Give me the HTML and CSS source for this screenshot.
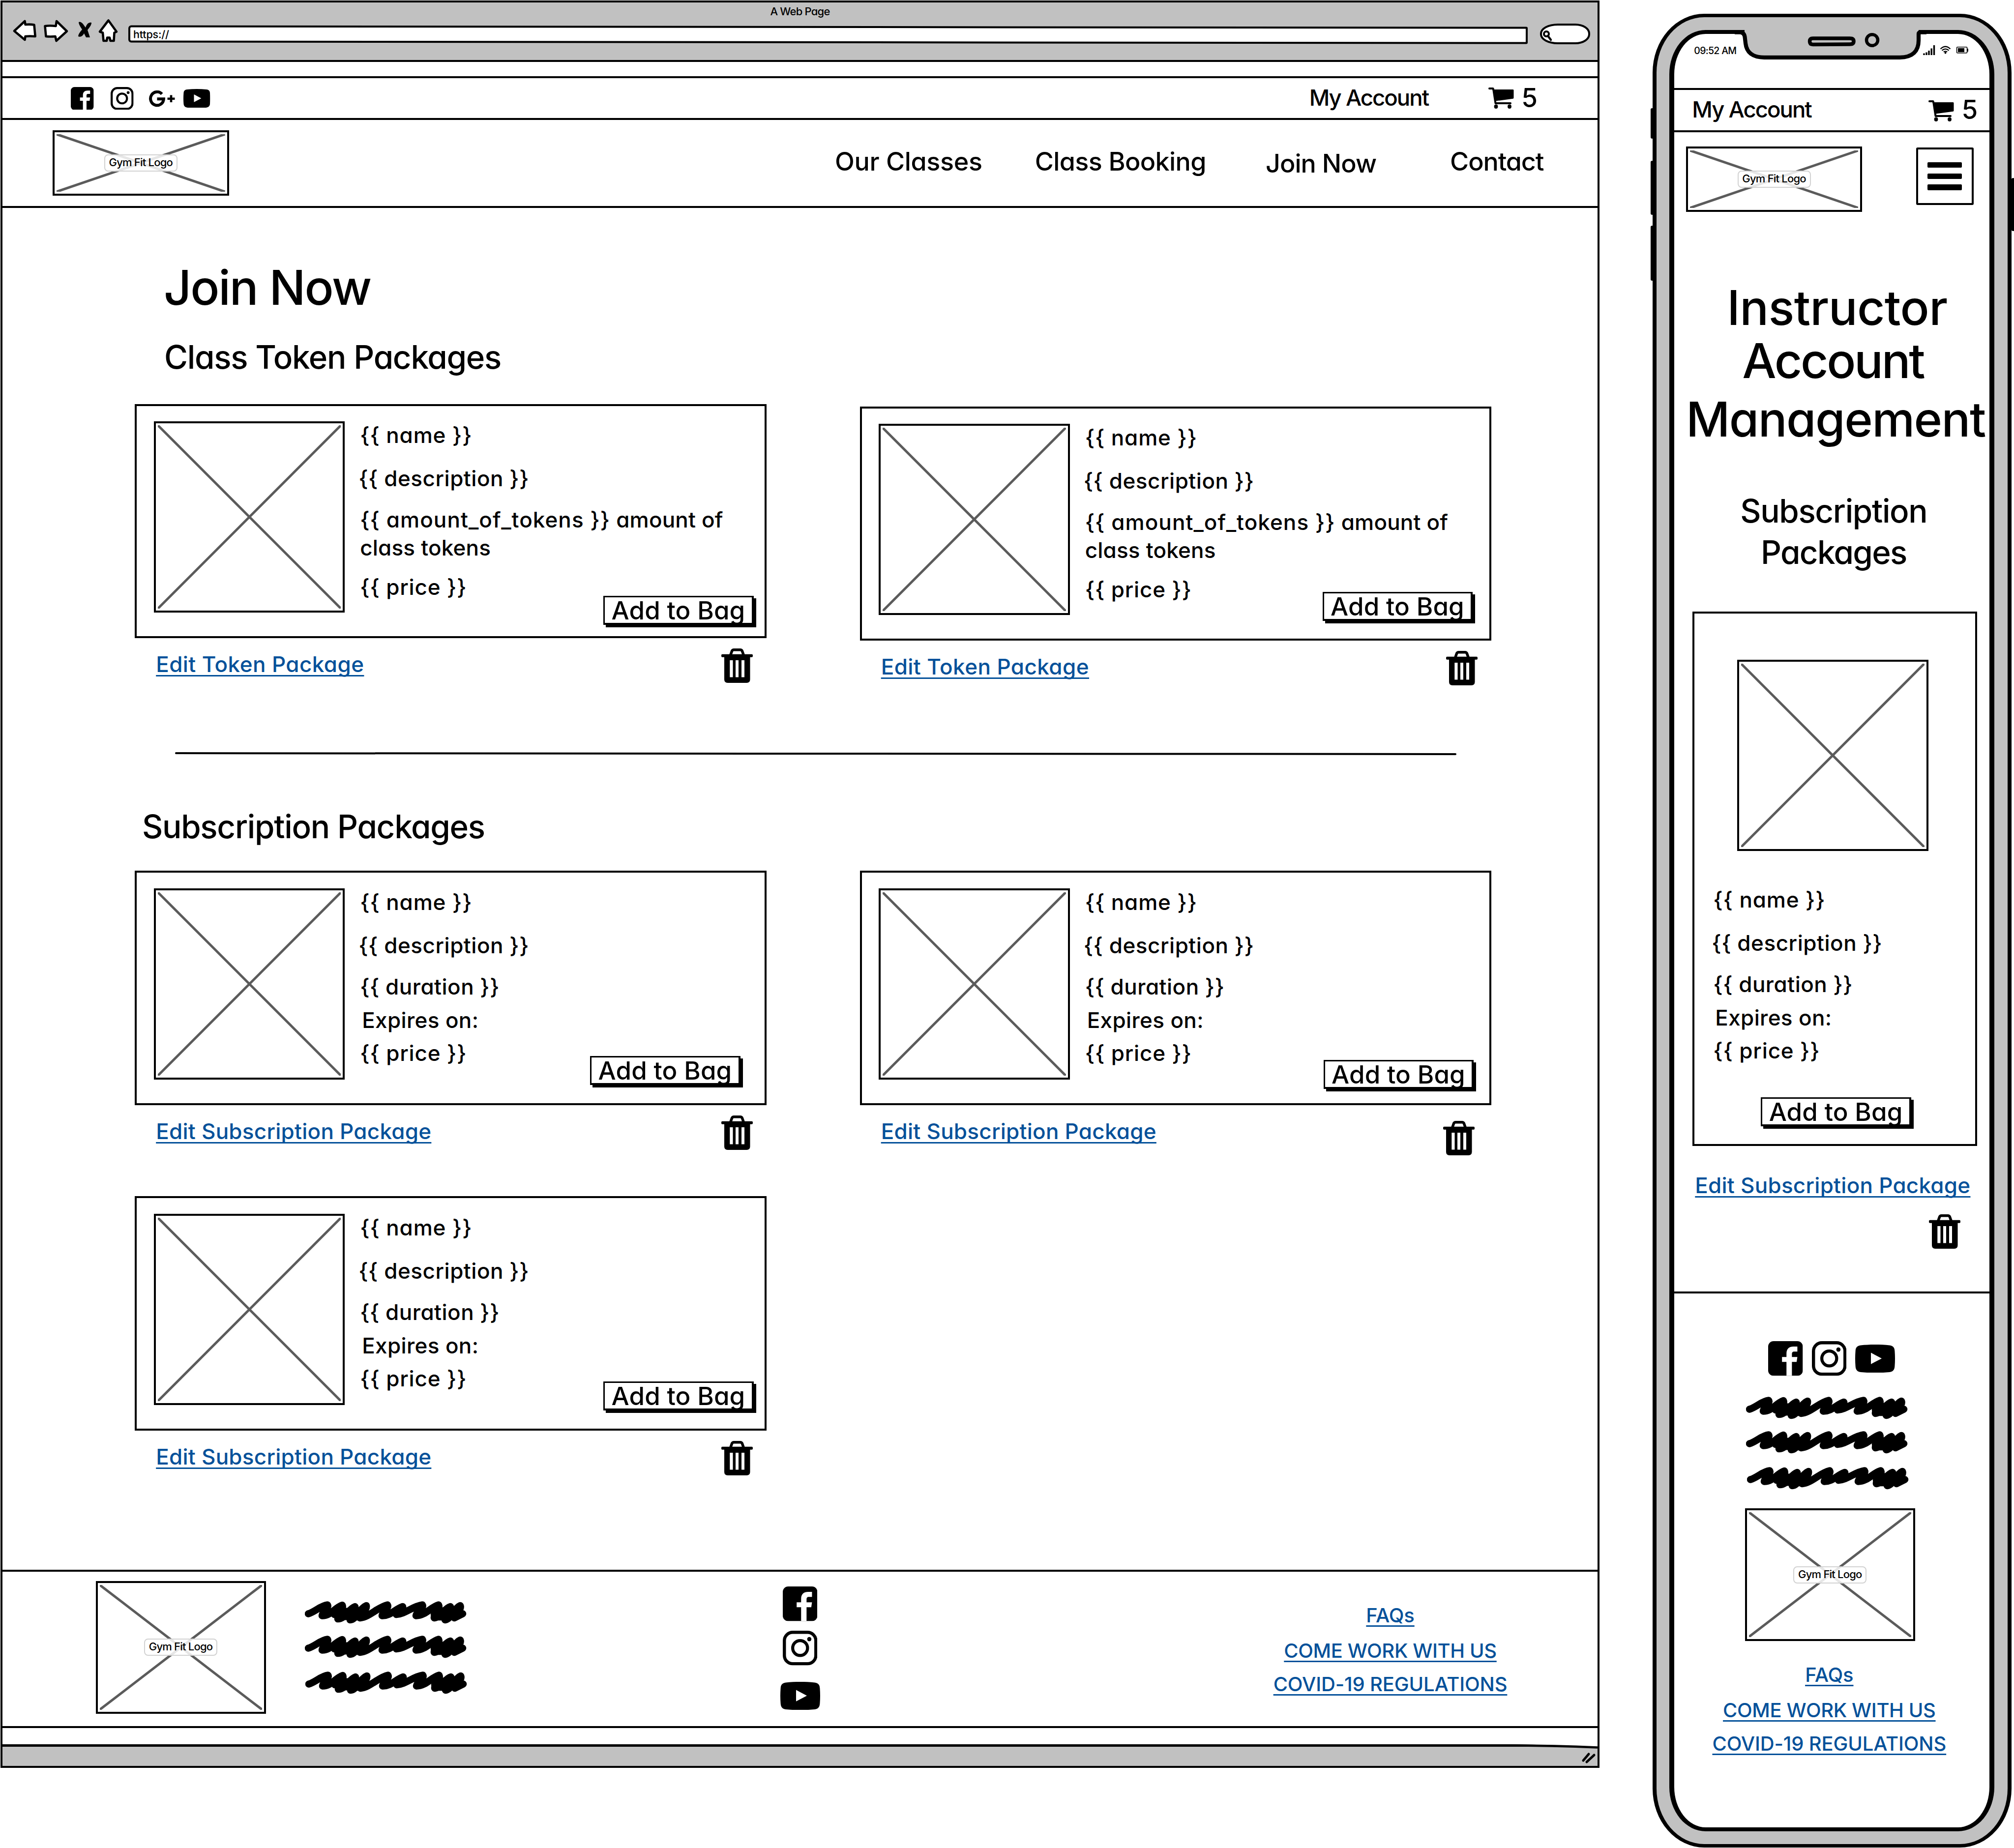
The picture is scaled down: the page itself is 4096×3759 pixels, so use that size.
FILE: index.html
```html
<!DOCTYPE html>
<html lang="en">
<head>
<meta charset="utf-8">
<title>Gym Fit – Join Now wireframes</title>
<link rel="stylesheet" href="styles.css">
</head>
<body>
<svg class="defs" aria-hidden="true">
  <symbol id="facebook" viewBox="0 0 70 70"><rect width="70" height="70" rx="11"/><path fill="#fff" d="M37 70V42H28V32H37V25C37 15 43 11 51 11H59V21H53C49 21 48 23 48 26V32H59L57.500 42H48V70Z"/></symbol>
  <symbol id="instagram" viewBox="0 0 70 70"><rect x="3.200" y="3.200" width="63.600" height="63.600" rx="17" fill="none" stroke="#000" stroke-width="6.400"/><circle cx="35" cy="35" r="15" fill="none" stroke="#000" stroke-width="6.200"/><circle cx="53.500" cy="17" r="4.300"/></symbol>
  <symbol id="youtube" viewBox="0 0 81 57.500"><path d="M11 1.500C30 -.4 51 -.4 70 1.500C77 2.300 80 6 80.400 13C81.200 23 81.200 34 80.400 44C80 51 77 55.200 70 56C51 57.900 30 57.900 11 56C4 55.200 1 51 .6 44C-.2 34 -.2 23 .6 13C1 6 4 2.300 11 1.500Z"/><path fill="#fff" d="M32 16.500L54 28.200L32 39.700Z"/></symbol>
  <symbol id="gplus" viewBox="0 0 53 34"><path d="M26.300 7.200A13.400 13.700 0 1 0 29.900 17.300H16.500" fill="none" stroke="#000" stroke-width="6"/><path d="M37.500 16.800H52.500M45 9.600V24" stroke="#000" stroke-width="4.600"/></symbol>
  <symbol id="cart" viewBox="0 0 52 43"><path d="M2 2H9.500L10.500 6L14.500 32H45" fill="none" stroke="#000" stroke-width="4" stroke-linecap="round" stroke-linejoin="round"/><path d="M9 4H50Q51.500 4 51.500 5.500V21Q51.500 22.500 50 22.800L14.500 27.500Z"/><ellipse cx="15.500" cy="38.800" rx="3.900" ry="4.200"/><ellipse cx="43" cy="38.800" rx="3.900" ry="4.200"/></symbol>
  <symbol id="trash" viewBox="0 0 64 70"><path d="M18.500 14L21.500 5.500Q22.500 2.700 25.500 2.700H38.500Q41.500 2.700 42.500 5.500L45.500 14" fill="none" stroke="#000" stroke-width="5.400"/><rect y="11.700" width="64" height="6" rx="2"/><path fill-rule="evenodd" d="M6 15H58.500V63Q58.500 70 51.500 70H13Q6 70 6 63ZM17.300 24V58.500H23.500V24ZM29 24V58.500H35V24ZM41 24V58.500H47V24Z"/></symbol>
  <symbol id="scribble" viewBox="0 0 329 46"><path d="M7 25.500C20 22 32 9 46 7.500C50 13 36 20 35 29.500C52 30 60 14 76 8C80 16 66 26 67 36C82 36 88 16 102 11C104 20 92 28 92 38C104 38 112 14 125 9C127 18 113 26 112 34C132 32 148 12 168 7.500C172 14 158 20 157 29.500C174 30 184 16 199 11C200 17 188 20 186 27C204 26 220 10 239 7.500C243 14 227 20 226 29.500C246 29 256 12 272 7.500C276 16 262 24 263 34C278 32 284 14 296 11C299 20 284 28 285 38C298 36 304 14 316 9C320 18 302 26 304 34L321 25.500M60 27L112 28M68 21L118 20M78 31L108 32M186 24L200 18M263 27L304 26M268 20L312 19M270 32L306 31" fill="none" stroke="#000" stroke-width="14.500" stroke-linecap="round" stroke-linejoin="round"/></symbol>
</svg>

<section class="browser">
  <div class="toolbar">
    <div class="toolbar-title">A Web Page</div>
    <div class="toolbar-row">
      <svg class="nav-icons" width="220" height="50" viewBox="22 38 220 50">
        <g fill="#fff" stroke="#000" stroke-width="4.600" stroke-linejoin="round">
          <path d="M29 63L50.500 43L51.500 50Q61 49 69.500 50.500L71.700 74Q60 73 51.500 74L50.500 81Z"/>
          <path d="M91.500 53Q101 51.500 113.500 53L115 43L136 63.500L114.500 83L112.500 74Q102 75 93.500 74Z"/>
          <path d="M220.500 41.500L203 64.500L209 66.500L210.500 83H217L218 76.500H223L224.500 83H231.500L232.500 66.500L237 64.500Z"/>
        </g>
        <path d="M160 45Q164 43 169 49L174 56Q178 44 186 46Q187 50 178 61L183 76H175L171 68Q166 77 159 74Q159 69 167 60Q160 50 160 45Z"/>
      </svg>
      <div class="url">https://</div>
      <div class="search"><svg width="22" height="24" viewBox="0 0 22 24"><circle cx="8" cy="8" r="5" fill="none" stroke="#000" stroke-width="4"/><path d="M11 12L17 20" stroke="#000" stroke-width="4.500" stroke-linecap="round"/></svg></div>
    </div>
  </div>

  <div class="topbar">
    <svg class="tb-fb"><use href="#facebook"/></svg>
    <svg class="tb-ig"><use href="#instagram"/></svg>
    <svg class="tb-gp"><use href="#gplus"/></svg>
    <svg class="tb-yt"><use href="#youtube"/></svg>
    <span class="account">My Account</span>
    <svg class="cart"><use href="#cart"/></svg>
    <span class="count">5</span>
  </div>

  <header class="header">
    <div class="placeholder logo"><svg><line x2="100%" y2="100%"/><line x1="100%" y2="100%"/></svg><span>Gym Fit Logo</span></div>
    <nav class="menu">
      <span class="m1">Our Classes</span><span class="m2">Class Booking</span><span class="m3">Join Now</span><span class="m4">Contact</span>
    </nav>
  </header>

  <main class="main">
    <h1>Join Now</h1>
    <h2 class="h-token">Class Token Packages</h2>
    <div class="grid">
      <article>
        <div class="card">
          <div class="placeholder photo"><svg><line x2="100%" y2="100%"/><line x1="100%" y2="100%"/></svg></div>
          <div class="info">
            <p class="name">{{ name }}</p><p class="desc">{{ description }}</p>
            <p class="amount"><span>{{ amount_of_tokens }}</span> amount of<br>class tokens</p>
            <p class="price token">{{ price }}</p>
            <span class="btn b1">Add to Bag</span>
          </div>
        </div>
        <div class="actions"><a class="token-link">Edit Token Package</a><svg class="trash"><use href="#trash"/></svg></div>
      </article>
      <article class="lower">
        <div class="card">
          <div class="placeholder photo"><svg><line x2="100%" y2="100%"/><line x1="100%" y2="100%"/></svg></div>
          <div class="info">
            <p class="name">{{ name }}</p><p class="desc">{{ description }}</p>
            <p class="amount"><span>{{ amount_of_tokens }}</span> amount of<br>class tokens</p>
            <p class="price token">{{ price }}</p>
            <span class="btn b2">Add to Bag</span>
          </div>
        </div>
        <div class="actions"><a class="token-link">Edit Token Package</a><svg class="trash"><use href="#trash"/></svg></div>
      </article>
    </div>

    <div class="rule"></div>

    <h2 class="h-sub">Subscription Packages</h2>
    <div class="grid">
      <article>
        <div class="card">
          <div class="placeholder photo"><svg><line x2="100%" y2="100%"/><line x1="100%" y2="100%"/></svg></div>
          <div class="info">
            <p class="name">{{ name }}</p><p class="desc">{{ description }}</p><p class="duration">{{ duration }}</p><p class="expires">Expires on:</p><p class="price">{{ price }}</p>
            <span class="btn b3">Add to Bag</span>
          </div>
        </div>
        <div class="actions"><a>Edit Subscription Package</a><svg class="trash"><use href="#trash"/></svg></div>
      </article>
      <article>
        <div class="card">
          <div class="placeholder photo"><svg><line x2="100%" y2="100%"/><line x1="100%" y2="100%"/></svg></div>
          <div class="info">
            <p class="name">{{ name }}</p><p class="desc">{{ description }}</p><p class="duration">{{ duration }}</p><p class="expires">Expires on:</p><p class="price">{{ price }}</p>
            <span class="btn b4">Add to Bag</span>
          </div>
        </div>
        <div class="actions"><a>Edit Subscription Package</a><svg class="trash low"><use href="#trash"/></svg></div>
      </article>
      <article>
        <div class="card">
          <div class="placeholder photo"><svg><line x2="100%" y2="100%"/><line x1="100%" y2="100%"/></svg></div>
          <div class="info">
            <p class="name">{{ name }}</p><p class="desc">{{ description }}</p><p class="duration">{{ duration }}</p><p class="expires">Expires on:</p><p class="price">{{ price }}</p>
            <span class="btn b5">Add to Bag</span>
          </div>
        </div>
        <div class="actions"><a>Edit Subscription Package</a><svg class="trash"><use href="#trash"/></svg></div>
      </article>
    </div>
  </main>

  <footer class="footer">
    <div class="placeholder logo-big"><svg><line x2="100%" y2="100%"/><line x1="100%" y2="100%"/></svg><span>Gym Fit Logo</span></div>
    <div class="scribbles"><svg><use href="#scribble"/></svg><svg><use href="#scribble"/></svg><svg><use href="#scribble"/></svg></div>
    <div class="social-col"><svg class="sq"><use href="#facebook"/></svg><svg class="sq"><use href="#instagram"/></svg><svg class="yt"><use href="#youtube"/></svg></div>
    <div class="links"><a class="faq">FAQs</a><a class="work">COME WORK WITH US</a><a class="covid">COVID-19 REGULATIONS</a></div>
  </footer>

  <div class="statusbar">
    <svg width="190" height="43" viewBox="0 0 190 43">
      <path fill="#fff" d="M0 -6H190V6Q110 1 0 0Z"/>
      <path fill="none" stroke="#000" stroke-width="4.500" d="M0 2.200Q100 2.500 190 6.500"/>
      <path stroke="#000" stroke-width="5" stroke-linecap="round" d="M161 33L172 20M168 36L183 22"/>
    </svg>
  </div>
</section>

<section class="phone">
  <i class="key k1"></i><i class="key k2"></i><i class="key k3"></i><i class="key k4"></i>
  <div class="screen">
    <svg class="notch" width="400" height="72" viewBox="3520 54 400 72">
      <path fill="#c1c1c1" d="M3548 54V75C3551 100 3558 117 3590 117H3866C3893 117 3902 105 3902 85V54Z"/>
      <path fill="none" stroke="#000" stroke-width="8.200" d="M3528 65.600H3538Q3547 65.600 3548.500 75L3550 88C3552 107 3565 116.800 3588 116.800H3864C3890 116.800 3902 104 3902 82V69Q3902 65.600 3906 65.600H3918"/>
      <path fill="none" stroke="#000" stroke-width="7.500" d="M3687 78H3762Q3770 78 3770 84Q3770 90 3762 90L3687 90.500Q3680.500 90.500 3680.500 84Q3680.500 78 3687 78Z"/>
      <ellipse cx="3807.500" cy="81.500" rx="11.500" ry="11.300" fill="none" stroke="#000" stroke-width="6.500"/>
    </svg>
    <div class="status"><span>09:52 AM</span>
      <svg width="92" height="22" viewBox="3911 90 92 22">
        <path d="M3913 111V107.500M3918 111V105.500M3923 111V102M3928.200 111V97.500M3933.500 111V91" stroke="#000" stroke-width="3.400"/>
        <path d="M3946.500 98.500Q3956.500 89 3966.500 98.500M3949.500 101.700Q3956.500 95.500 3963.500 101.700M3952.800 104.600Q3956.500 102 3960.200 104.600" fill="none" stroke="#000" stroke-width="2.300"/><circle cx="3956.500" cy="106.500" r="1.900"/>
        <rect x="3979.600" y="94.800" width="21" height="12" rx="1.500" fill="none" stroke="#000" stroke-width="1.600"/><rect x="3982" y="97" width="13" height="8"/><path d="M4002 98V104" stroke="#000" stroke-width="1.800"/>
      </svg>
    </div>
    <div class="p-topbar"><span class="account">My Account</span><svg class="cart"><use href="#cart"/></svg><span class="count">5</span></div>
    <div class="p-header">
      <div class="placeholder logo"><svg><line x2="100%" y2="100%"/><line x1="100%" y2="100%"/></svg><span>Gym Fit Logo</span></div>
      <div class="burger"><i></i><i></i><i></i></div>
    </div>
    <h1><span class="l1">Instructor</span><span class="l2">Account</span><span class="l3">Management</span></h1>
    <h2>Subscription<br><span>Packages</span></h2>
    <div class="p-card">
      <div class="placeholder photo"><svg><line x2="100%" y2="100%"/><line x1="100%" y2="100%"/></svg></div>
      <p class="name">{{ name }}</p><p class="desc">{{ description }}</p><p class="duration">{{ duration }}</p><p class="expires">Expires on:</p><p class="price">{{ price }}</p>
      <span class="btn">Add to Bag</span>
    </div>
    <a class="p-edit">Edit Subscription Package</a>
    <svg class="trash"><use href="#trash"/></svg>
    <div class="p-rule"></div>
    <div class="social-row"><svg class="sq"><use href="#facebook"/></svg><svg class="sq"><use href="#instagram"/></svg><svg class="yt"><use href="#youtube"/></svg></div>
    <div class="scribbles"><svg><use href="#scribble"/></svg><svg><use href="#scribble"/></svg><svg><use href="#scribble"/></svg></div>
    <div class="placeholder logo-big"><svg><line x2="100%" y2="100%"/><line x1="100%" y2="100%"/></svg><span>Gym Fit Logo</span></div>
    <div class="links"><a class="faq">FAQs</a><a class="work">COME WORK WITH US</a><a class="covid">COVID-19 REGULATIONS</a></div>
  </div>
</section>
</body>
</html>
```
FILE: styles.css
```css
* { box-sizing: border-box; margin: 0; padding: 0; }
body {
  display: flex; align-items: flex-start;
  width: 4096px; height: 3759px; overflow: hidden;
  background: #fff; color: #000;
  font: 500 44px/1 Inter, "Liberation Sans", sans-serif;
  font-feature-settings: "cv11";
  white-space: nowrap;
}
svg { display: block; flex: none; }
.defs { position: absolute; width: 0; height: 0; }
h1, h2 { font-weight: 500; }
h1 { font-size: 98px; letter-spacing: -.0219em; }
h2 { font-size: 65.5px; letter-spacing: -.0196em; }
a {
  color: #04519a; letter-spacing: .0057em;
  text-decoration: underline; text-decoration-thickness: 3px;
  text-underline-offset: 5.5px; text-decoration-skip-ink: none;
}

/* shared pieces */
.placeholder { position: relative; display: flex; align-items: center; justify-content: center; flex: none; border: 4px solid #000; }
.placeholder svg { position: absolute; inset: 4px; width: calc(100% - 8px); height: calc(100% - 8px); overflow: hidden; }
.placeholder line { stroke: #5b5b5b; stroke-width: 5px; }
.placeholder span {
  position: relative; width: 149px; height: 35px; padding-top: 3px;
  border: 2px solid #d2d2d2; border-radius: 8px; background: rgba(255, 255, 255, .85);
  font-size: 22px; letter-spacing: -.0361em; text-align: center;
}
.logo { width: 358.5px; height: 133px; }
.logo-big { width: 346px; height: 269.5px; }
.photo { width: 388.5px; height: 389px; }
.account { font-size: 45.5px; letter-spacing: -.0435em; }
.count { font-size: 53px; }
.cart { width: 52px; height: 43px; }
.trash { width: 64px; height: 70px; }
.btn {
  display: block; width: 305.5px; height: 59px;
  border: 3px solid #000; border-right-width: 4px; border-bottom-width: 4px;
  background: #fff; box-shadow: 5px 5px 0 #000;
  font-size: 51px; line-height: 53px; letter-spacing: .0028em; text-align: center;
}
.name { margin-top: 6px; letter-spacing: .0197em; }
.desc { margin: 44px 0 0 -3px; letter-spacing: .0118em; }
.amount { margin-top: 34px; line-height: 57px; letter-spacing: .0044em; }
.amount span { letter-spacing: .024em; }
.duration { margin-top: 40.500px; letter-spacing: .0109em; }
.expires { margin: 23.500px 0 0 4px; letter-spacing: .0083em; }
.price { margin-top: 23px; letter-spacing: .0189em; }
.price.token { margin-top: 29px; }
.scribbles svg { width: 329px; height: 46px; }
.scribbles svg:nth-child(2) { margin-top: 23.500px; }
.scribbles svg:nth-child(3) { margin: 27px 0 0 1.500px; }
.sq { width: 70.500px; height: 70.500px; }
.yt { width: 81px; height: 57.500px; }
.links { display: flex; flex-direction: column; align-items: center; font-size: 40px; }
.faq { padding: 0 2.500px; letter-spacing: -.0049em; }
.work { margin-top: 32px; letter-spacing: -.0094em; }
.covid { margin-top: 28px; letter-spacing: -.0035em; }

/* browser window */
.browser { display: flex; flex-direction: column; flex: none; width: 3252px; height: 3595px; margin: 1px 0 0 1px; border: 4px solid #000; }
.toolbar { height: 121px; flex: none; padding-top: 7px; border-bottom: 4px solid #000; background: #c1c1c1; }
.toolbar-title { font-size: 22px; letter-spacing: -.0355em; text-align: center; }
.toolbar-row { display: flex; height: 58px; padding-left: 17px; }
.nav-icons { margin-top: 4px; }
.url {
  width: 2846px; height: 35px; margin: 18.500px 0 0 19px; padding: 4px 0 0 6px;
  border: 4px solid #000; border-radius: 6px 3px 3px 6px; background: #fff;
  font-size: 21.500px; letter-spacing: -.0088em; transform: rotate(.0624deg);
}
.search { width: 102px; height: 42px; margin: 14px 0 0 25px; padding: 9px 0 0 1px; border: 4.500px solid #000; border-radius: 36px 30px 30px 36px / 20px; background: #fff; }
.topbar { display: flex; align-items: center; flex: none; height: 89px; margin-top: 28.500px; padding-left: 139px; border: solid #000; border-width: 4px 0; }
.tb-fb, .tb-ig { width: 46.600px; height: 46.600px; margin-top: 2px; }
.tb-ig { margin-left: 34.500px; }
.tb-gp { width: 53px; height: 34px; margin: 3px 0 0 31.500px; }
.tb-yt { width: 54.500px; height: 38.700px; margin: 2px 0 0 17px; }
.topbar .account { margin-left: 2235px; }
.topbar .cart { margin-left: 122px; }
.topbar .count { margin-left: 15px; }
.header { display: flex; align-items: center; flex: none; height: 179.500px; padding-left: 102px; border-bottom: 4px solid #000; }
.menu { display: flex; margin-left: 1232.500px; font-size: 52px; }
.menu span { margin-top: -1px; }
.menu .m1 { letter-spacing: -.0059em; }
.menu .m2 { margin-left: 107px; letter-spacing: -.0114em; }
.menu .m3 { margin: 3px 0 0 121px; letter-spacing: -.0177em; }
.menu .m4 { margin-left: 150px; letter-spacing: -.0211em; }

.main { flex: none; height: 2769.500px; }
.main h1 { margin: 112.800px 0 0 328px; }
.main .h-token { margin: 60.500px 0 0 329px; }
.main .h-sub { margin: 114px 0 0 284px; letter-spacing: -.0195em; }
.grid { display: grid; grid-template-columns: 1284.500px 1284.500px; gap: 83.500px 190px; margin: 62px 0 0 269.200px; }
.h-sub + .grid { margin-top: 57px; }
.lower { margin-top: 5px; }
.card { display: flex; height: 476.500px; padding: 31.500px 0 0 34.500px; border: 4px solid #000; }
.info { display: flex; flex-direction: column; flex: 1; width: 0; margin-left: 31px; }
.btn.b1, .btn.b2, .btn.b3, .btn.b4, .btn.b5 { align-self: flex-end; }
.btn.b1 { margin: -4.500px 22px 0 0; }
.btn.b2 { margin: -17px 34px 0 0; }
.btn.b3 { margin: -16px 49px 0 0; }
.btn.b4 { margin: -8px 32px 0 0; }
.btn.b5 { margin: -15.500px 22px 0 0; }
.actions { display: flex; justify-content: space-between; align-items: flex-start; padding: 21px 28px 0 43px; }
.actions a { margin-top: 10px; }
.actions .token-link { letter-spacing: .0098em; }
.trash.low { margin: 11px 6px 0 0; }
.rule { width: 2606px; height: 3.500px; margin: 137px 0 0 351px; border-radius: 2px; background: #000; transform: rotate(.04deg); }

.footer { display: flex; align-items: flex-start; flex: none; height: 322.600px; border: solid #000; border-width: 4px 0; }
.footer .logo-big { margin: 19.500px 0 0 189.500px; }
.footer .scribbles { margin: 60.500px 0 0 79px; }
.social-col { width: 81px; margin: 30.500px 0 0 636.500px; }
.social-col .sq { margin: 0 0 19.500px 5px; }
.social-col .yt { margin-top: 33px; }
.footer .links { width: 480px; margin: 69.500px 0 0 920px; }
.statusbar { display: flex; justify-content: flex-end; flex: 1; margin-top: 33.300px; background: linear-gradient(#000 4.500px, #c1c1c1 4.500px); }

/* phone */
.phone {
  position: relative; flex: none; width: 730px; height: 3730px; margin: 28px 0 0 108px; padding: 26px 26.300px;
  border: solid #000; border-width: 7.500px 8.800px; border-radius: 105px / 120px; background: #c1c1c1;
}
.key { position: absolute; left: -12.500px; width: 6px; border-radius: 4px; background: #000; }
.k1 { top: 185px; height: 62px; }
.k2 { top: 292px; height: 110px; }
.k3 { top: 424px; height: 112px; }
.k4 { top: 327px; left: auto; right: -13.800px; height: 108px; }
.screen { display: flex; flex-direction: column; width: 661px; height: 100%; border: solid #000; border-width: 8px 10px; border-radius: 74px / 90px; background: #fff; }
.notch { position: absolute; left: 151px; top: 18.500px; }
.status { display: flex; justify-content: space-between; align-items: center; flex: none; height: 68px; padding: 2px 43px 0 40px; font-size: 19.500px; letter-spacing: -.0358em; }
.status svg { margin-top: -4px; }
.p-topbar { display: flex; align-items: center; flex: none; height: 90px; margin-top: 42px; padding: 0 24px 2px 36px; border: solid #000; border-width: 4px 0; }
.p-topbar .cart { margin: 5px 0 0 auto; }
.p-topbar .count { margin-left: 16px; }
.p-header { display: flex; justify-content: space-between; align-items: flex-start; flex: none; padding: 28.500px 32.500px 0 23.500px; }
.burger { display: flex; flex-direction: column; gap: 11.200px; width: 117px; height: 117.500px; margin-top: 2px; padding: 26.500px 19.500px; border: 4px solid #000; border-radius: 3px; }
.burger i { height: 12px; border-radius: 2px; background: #000; }
.screen h1 { flex: none; margin-top: 146.500px; text-align: center; }
.screen h1 span { display: block; }
.screen h1 .l1 { padding-left: 21px; letter-spacing: -.0065em; }
.screen h1 .l2 { margin-top: 10px; padding-left: 4px; letter-spacing: -.0339em; }
.screen h1 .l3 { margin-top: 21.300px; padding-left: 15px; letter-spacing: -.0163em; }
.screen h2 { flex: none; margin-top: 95.500px; padding-left: 7px; line-height: 84.600px; letter-spacing: -.0205em; text-align: center; }
.screen h2 span { letter-spacing: -.0253em; }
.p-card { flex: none; width: 579px; height: 1087px; margin: 77.500px 0 0 37px; padding: 93.500px 0 0 38px; border: 4px solid #000; }
.p-card .photo { margin-left: 49px; }
.p-card .name { margin-top: 77px; }
.p-card .btn { margin: 73px 0 0 97px; }
.p-edit { align-self: flex-start; margin: 58px 0 0 42px; }
.screen > .trash { margin: 37px 0 0 518px; }
.p-rule { flex: none; height: 3.500px; margin-top: 87px; background: #000; }
.social-row { display: flex; align-items: center; flex: none; margin: 97.300px 0 0 191px; }
.social-row .sq { margin-right: 18px; }
.screen .scribbles { margin: 42.500px 0 0 146px; }
.screen .logo-big { margin: 38.500px 0 0 143.500px; }
.screen .links { margin: 49.500px 11px 0 0; }
```
